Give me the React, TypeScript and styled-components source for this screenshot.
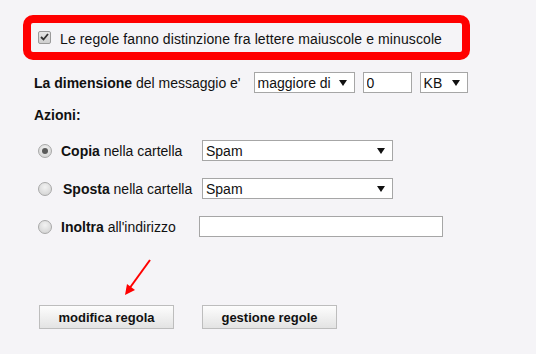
import React, { useState } from "react";
import styled, { createGlobalStyle } from "styled-components";

const GlobalStyle = createGlobalStyle`
  html, body {
    margin: 0;
    padding: 0;
    background: #f5f4f7;
  }
  body {
    font-family: "Liberation Sans", Arial, sans-serif;
    font-size: 14px;
    color: #111;
  }
`;

const Page = styled.div`
  width: 536px;
  height: 354px;
  padding: 15px 0 0 23px;
  box-sizing: border-box;
`;

const Highlight = styled.div`
  width: 447px;
  height: 45px;
  box-sizing: border-box;
  border: 8px solid #ff0000;
  border-radius: 10px;
  display: flex;
  align-items: center;
  padding-left: 7px;
  gap: 9px;
`;

const CheckBox = styled.span`
  width: 11px;
  height: 11px;
  border: 1px solid #9a9a9a;
  border-radius: 2px;
  background: linear-gradient(#e6e6e6, #cfcfcf);
  display: flex;
  align-items: center;
  justify-content: center;
  margin-top: -1px;
`;

const Label = styled.span`
  line-height: 16px;
  margin-top: 2px;
  letter-spacing: 0.1px;
`;

const SizeRow = styled.div`
  display: flex;
  align-items: center;
  margin: 12px 0 0 11px;
  height: 21px;
`;

const SizeText = styled.span`
  margin-right: 13px;
  white-space: nowrap;
`;

const SelectBox = styled.label<{ $width: number }>`
  width: ${(p) => p.$width}px;
  height: 21px;
  box-sizing: border-box;
  border: 1px solid #a6a6a6;
  background: #fff;
  display: flex;
  align-items: center;
  padding: 0 7px 0 3px;
  flex: none;
`;

const Select = styled.select`
  appearance: none;
  border: none;
  background: transparent;
  font: inherit;
  color: #111;
  flex: 1;
  min-width: 0;
  padding: 0;
  outline: none;
`;

const TextBox = styled.input<{ $width: number }>`
  width: ${(p) => p.$width}px;
  height: 21px;
  box-sizing: border-box;
  border: 1px solid #a6a6a6;
  background: #fff;
  font: inherit;
  color: #111;
  padding: 0 3px;
  outline: none;
  flex: none;
`;

const Gap = styled.span<{ $w: number }>`
  width: ${(p) => p.$w}px;
  flex: none;
`;

const Heading = styled.div`
  font-weight: bold;
  margin: 14px 0 0 11px;
  line-height: 16px;
`;

const Actions = styled.div`
  display: flex;
  flex-direction: column;
  gap: 17px;
  margin: 17px 0 0 15px;
`;

const ActionRow = styled.div`
  display: flex;
  align-items: center;
  height: 21px;
`;

const Radio = styled.span<{ $on?: boolean }>`
  width: 12px;
  height: 12px;
  border-radius: 50%;
  border: 1px solid #a8a8a8;
  background: radial-gradient(circle at 50% 35%, #f2f2f2, #cfcfcf);
  display: flex;
  align-items: center;
  justify-content: center;
  flex: none;
  margin-right: 9px;
  &::after {
    content: "";
    width: 6px;
    height: 6px;
    border-radius: 50%;
    background: ${(p) => (p.$on ? "#5a5a5a" : "transparent")};
  }
`;

const ActionLabel = styled.span<{ $w: number; $pad?: number }>`
  width: ${(p) => p.$w}px;
  padding-left: ${(p) => p.$pad || 0}px;
  box-sizing: border-box;
  flex: none;
  white-space: nowrap;
`;

const Pointer = styled.svg`
  display: block;
  margin: 21px 0 0 100px;
`;

const Buttons = styled.div`
  display: flex;
  gap: 28px;
  margin: 7px 0 0 16px;
`;

const Button = styled.button`
  width: 135px;
  height: 24px;
  box-sizing: border-box;
  border: 1px solid #bdbdbd;
  background: linear-gradient(#fdfdfd, #e3e3e3);
  font-family: "Liberation Sans", Arial, sans-serif;
  font-size: 13px;
  font-weight: bold;
  color: #111;
  padding: 0;
  cursor: pointer;
`;

const Caret = () => (
  <svg width="8" height="6" viewBox="0 0 8 6">
    <path d="M0 0 L8 0 L4 6 Z" fill="#111" />
  </svg>
);

const App = () => {
  const [action, setAction] = useState("copia");

  return (
    <>
      <GlobalStyle />
      <Page>
        <Highlight>
          <CheckBox>
            <svg width="9" height="8" viewBox="0 0 9 8">
              <path d="M1 4 L3.5 6.5 L8 1" stroke="#333" strokeWidth="1.8" fill="none" />
            </svg>
          </CheckBox>
          <Label>Le regole fanno distinzione fra lettere maiuscole e minuscole</Label>
        </Highlight>

        <SizeRow>
          <SizeText>
            <b>La dimensione</b> del messaggio e'
          </SizeText>
          <SelectBox $width={101}>
            <Select defaultValue="gt">
              <option value="gt">maggiore di</option>
              <option value="lt">minore di</option>
            </Select>
            <Caret />
          </SelectBox>
          <Gap $w={8} />
          <TextBox $width={49} defaultValue="0" />
          <Gap $w={8} />
          <SelectBox $width={48}>
            <Select defaultValue="kb">
              <option value="kb">KB</option>
              <option value="mb">MB</option>
            </Select>
            <Caret />
          </SelectBox>
        </SizeRow>

        <Heading>Azioni:</Heading>

        <Actions>
          <ActionRow onClick={() => setAction("copia")}>
            <Radio $on={action === "copia"} />
            <ActionLabel $w={141}>
              <b>Copia</b> nella cartella
            </ActionLabel>
            <SelectBox $width={191}>
              <Select defaultValue="spam">
                <option value="spam">Spam</option>
              </Select>
              <Caret />
            </SelectBox>
          </ActionRow>
          <ActionRow onClick={() => setAction("sposta")}>
            <Radio $on={action === "sposta"} />
            <ActionLabel $w={141} $pad={2}>
              <b>Sposta</b> nella cartella
            </ActionLabel>
            <SelectBox $width={191}>
              <Select defaultValue="spam">
                <option value="spam">Spam</option>
              </Select>
              <Caret />
            </SelectBox>
          </ActionRow>
          <ActionRow onClick={() => setAction("inoltra")}>
            <Radio $on={action === "inoltra"} />
            <ActionLabel $w={138}>
              <b>Inoltra</b> all'indirizzo
            </ActionLabel>
            <TextBox $width={244} />
          </ActionRow>
        </Actions>

        <Pointer width="30" height="40" viewBox="0 0 30 40">
          <path d="M27 2 L6 31" stroke="#ff0000" strokeWidth="2" fill="none" />
          <path d="M2 37 L4 26 L12 32 Z" fill="#ff0000" />
        </Pointer>

        <Buttons>
          <Button>modifica regola</Button>
          <Button>gestione regole</Button>
        </Buttons>
      </Page>
    </>
  );
};

export default App;
